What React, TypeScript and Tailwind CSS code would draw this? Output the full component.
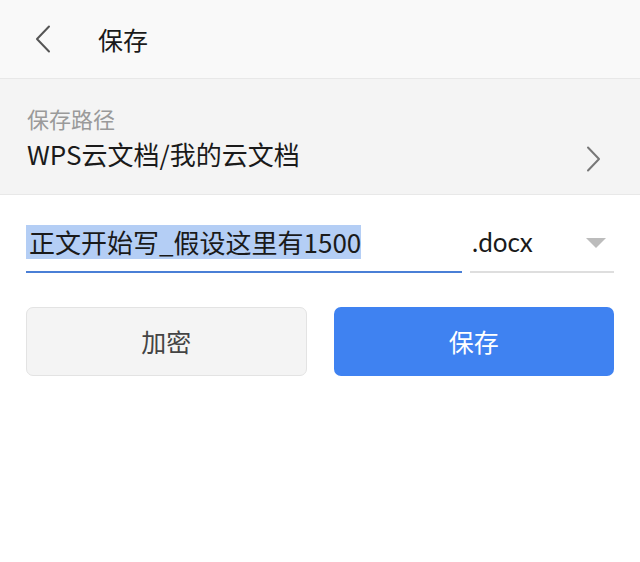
import { useState } from 'react';

const font = { fontFamily: '"Noto Sans CJK SC", "Noto Sans", sans-serif' };

export default function App() {
  const [name] = useState('正文开始写_假设这里有1500');

  return (
    <div className="w-[640px] h-[562px] bg-white text-[#1a1a1a]" style={font}>
      {/* header */}
      <div className="h-[79px] bg-[#f9f9f9] border-b border-[#e8e8e8] flex items-center">
        <button className="ml-[33px] w-[20px] h-[30px] flex items-center justify-center">
          <svg width="18" height="28" viewBox="0 0 18 28" fill="none">
            <path d="M15 1.5 L3 14 L15 26.5" stroke="#555" strokeWidth="2" strokeLinecap="round" strokeLinejoin="round" />
          </svg>
        </button>
        <h1 className="ml-[45px] text-[25px] leading-none font-normal">保存</h1>
      </div>

      {/* path */}
      <div className="h-[116px] bg-[#f4f4f4] border-b border-[#e8e8e8] flex items-center justify-between pl-[27px] pr-[38px]">
        <div className="flex flex-col pt-[1px]">
          <span className="text-[22px] leading-[30px] text-[#9a9a9a]">保存路径</span>
          <span className="text-[26px] leading-[36px] mt-[3px]">WPS云文档/我的云文档</span>
        </div>
        <svg width="16" height="26" viewBox="0 0 16 26" fill="none" className="mt-[44px]">
          <path d="M2 1.5 L13 13 L2 24.5" stroke="#777" strokeWidth="2" strokeLinecap="round" strokeLinejoin="round" />
        </svg>
      </div>

      {/* file name */}
      <div className="flex items-end px-[26px] mt-[30px]">
        <div className="w-[436px] border-b-2 border-[#4a7fd6] pb-[12px]">
          <span className="inline-block bg-[#b4cef5] text-[26px] leading-[34px] pl-[3px]">{name}</span>
        </div>
        <div className="ml-[8px] w-[144px] border-b-2 border-[#dedede] pb-[12px] flex items-center justify-between">
          <span className="text-[26px] leading-[34px] pl-[2px]" style={{ fontFamily: 'Lato, "Noto Sans CJK SC", sans-serif' }}>.docx</span>
          <svg width="20" height="10" viewBox="0 0 20 10" className="mr-[8px] mt-[2px]">
            <path d="M0 0 H20 L10 10 Z" fill="#bcbcbc" />
          </svg>
        </div>
      </div>

      {/* buttons */}
      <div className="flex gap-[27px] px-[26px] mt-[34px]">
        <button className="w-[281px] h-[69px] rounded-[7px] bg-[#f4f4f4] border border-[#e3e3e3] text-[25px] text-[#444]">
          加密
        </button>
        <button className="w-[281px] h-[69px] rounded-[7px] bg-[#3f82f1] text-[25px] text-white">
          保存
        </button>
      </div>
    </div>
  );
}
